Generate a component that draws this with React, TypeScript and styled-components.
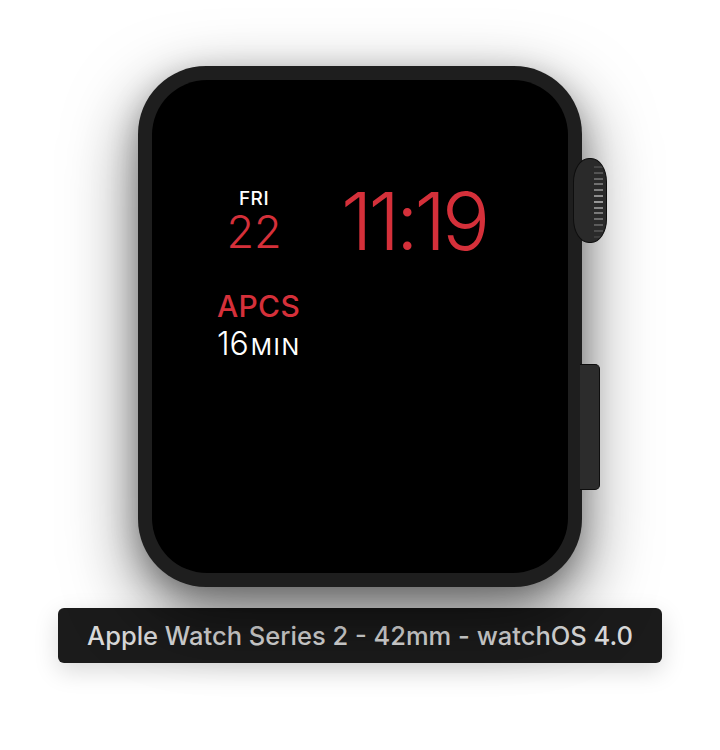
import React from "react";
import styled, { createGlobalStyle } from "styled-components";

const GlobalStyle = createGlobalStyle`
  html, body {
    margin: 0;
    padding: 0;
    background: #ffffff;
  }
  body {
    width: 720px;
    height: 750px;
    overflow: hidden;
    font-family: "Inter", "Noto Sans", sans-serif;
  }
`;

const RED = "#d5303a";

const Page = styled.div`
  width: 720px;
  height: 750px;
  padding-top: 66px;
  box-sizing: border-box;
  display: flex;
  flex-direction: column;
  align-items: center;
  gap: 21px;
`;

const Stage = styled.div`
  position: relative;
  width: 444px;
  height: 521px;
`;

const Body = styled.div`
  position: relative;
  z-index: 1;
  width: 444px;
  height: 521px;
  box-sizing: border-box;
  padding: 14px;
  border-radius: 68px;
  background: #1e1e1e;
  box-shadow: 0 26px 70px rgba(0, 0, 0, 0.55), 0 10px 30px rgba(0, 0, 0, 0.25);
`;

const Screen = styled.div`
  width: 100%;
  height: 100%;
  box-sizing: border-box;
  border-radius: 55px;
  background: #000;
  padding: 110px 0 0 65px;
  display: flex;
  flex-direction: column;
  gap: 30px;
`;

const TopRow = styled.div`
  display: flex;
  align-items: flex-start;
`;

const DateBlock = styled.div`
  width: 74px;
  display: flex;
  flex-direction: column;
  align-items: center;
  gap: 2px;
`;

const Weekday = styled.div`
  font-size: 19px;
  line-height: 18px;
  font-weight: 500;
  color: #ffffff;
  letter-spacing: 0.5px;
`;

const DayNum = styled.div`
  font-size: 45px;
  line-height: 44px;
  font-weight: 300;
  color: ${RED};
`;

const Time = styled.div`
  margin-left: 50px;
  margin-top: -9px;
  font-size: 80px;
  line-height: 80px;
  font-weight: 300;
  color: ${RED};
  letter-spacing: -4px;
`;

const Complication = styled.div`
  display: flex;
  flex-direction: column;
  gap: 7px;
`;

const CompTitle = styled.div`
  font-size: 30px;
  line-height: 30px;
  font-weight: 500;
  color: ${RED};
  letter-spacing: 0.3px;
`;

const CompValue = styled.div`
  font-size: 32px;
  line-height: 32px;
  font-weight: 350;
  color: #ffffff;
`;

const Unit = styled.span`
  font-size: 23.5px;
  font-weight: 400;
  letter-spacing: 1.5px;
  margin-left: 2px;
`;

const Crown = styled.div`
  position: absolute;
  z-index: 2;
  left: 435px;
  top: 92px;
  width: 34px;
  height: 85px;
  box-sizing: border-box;
  border: 1.5px solid #0e0e0e;
  border-radius: 16px / 24px;
  background: #2a2a2a;
  overflow: hidden;
`;

const Ridges = styled.div`
  position: absolute;
  right: 3px;
  top: 4px;
  bottom: 4px;
  width: 9px;
  background: repeating-linear-gradient(
    to bottom,
    transparent 0px,
    transparent 3px,
    #9a9a9a 3px,
    #9a9a9a 5px,
    transparent 5px,
    transparent 5.8px
  );
  -webkit-mask-image: linear-gradient(to bottom, rgba(0,0,0,0.15), rgba(0,0,0,1) 50%, rgba(0,0,0,0.15));
  mask-image: linear-gradient(to bottom, rgba(0,0,0,0.15), rgba(0,0,0,1) 50%, rgba(0,0,0,0.15));
`;

const SideButton = styled.div`
  position: absolute;
  z-index: 2;
  left: 442px;
  top: 298px;
  width: 20px;
  height: 126px;
  box-sizing: border-box;
  border: 1.5px solid #0e0e0e;
  border-left: none;
  border-radius: 0 5px 5px 0;
  background: #2c2c2c;
`;

const Label = styled.div`
  width: 604px;
  height: 55px;
  border-radius: 6px;
  background: #1b1b1b;
  color: #d9d9d9;
  display: flex;
  align-items: center;
  justify-content: center;
  font-family: "Inter", "Noto Sans", sans-serif;
  font-size: 25.5px;
  font-weight: 500;
  box-shadow: 0 8px 24px rgba(0, 0, 0, 0.15);
`;

export default function App() {
  return (
    <>
      <GlobalStyle />
      <Page>
        <Stage>
          <Body>
            <Screen>
              <TopRow>
                <DateBlock>
                  <Weekday>FRI</Weekday>
                  <DayNum>22</DayNum>
                </DateBlock>
                <Time>11:19</Time>
              </TopRow>
              <Complication>
                <CompTitle>APCS</CompTitle>
                <CompValue>
                  16<Unit>MIN</Unit>
                </CompValue>
              </Complication>
            </Screen>
          </Body>
          <Crown>
            <Ridges />
          </Crown>
          <SideButton />
        </Stage>
        <Label>Apple Watch Series 2 - 42mm - watchOS 4.0</Label>
      </Page>
    </>
  );
}
